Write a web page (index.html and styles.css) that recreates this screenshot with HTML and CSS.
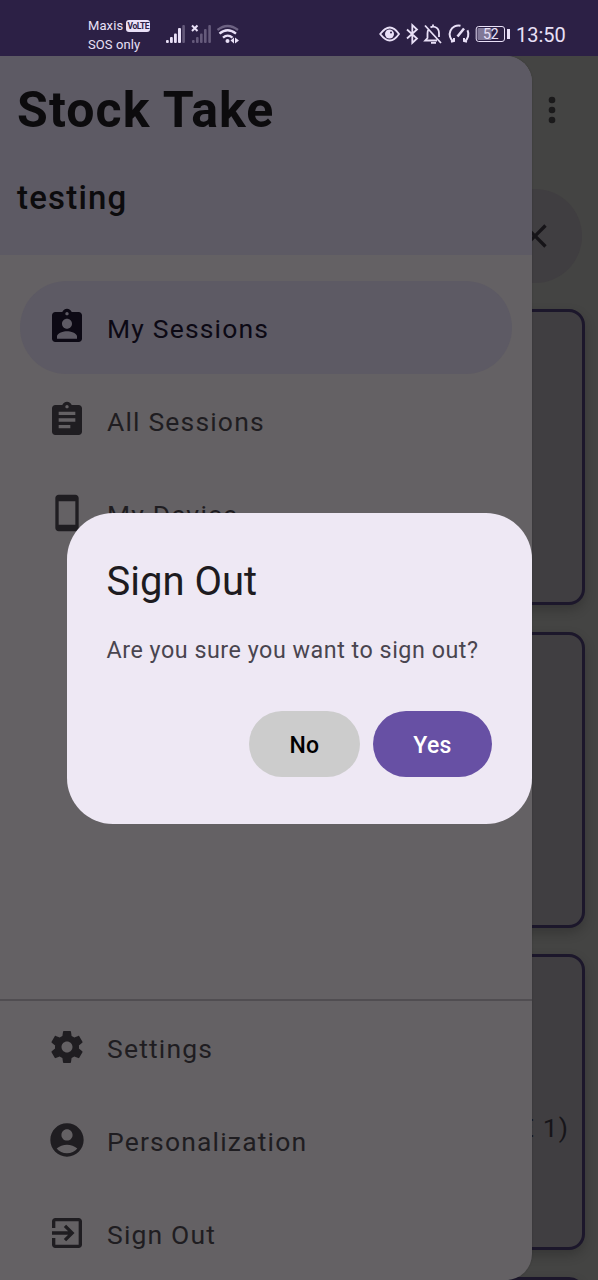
FILE: index.html
```
<!DOCTYPE html>
<html lang="en">
<head>
<meta charset="utf-8">
<title>Stock Take</title>
<link rel="stylesheet" href="styles.css">
</head>
<body>
<div class="screen">
  <header class="statusbar">
    <div class="carrier">
      <div class="carrier-line">Maxis <span class="volte">VoLTE</span></div>
      <div class="carrier-line">SOS only</div>
    </div>
    <svg class="signals" width="76" height="24" viewBox="0 0 76 24" fill="#e9e0f7">
      <rect x="1" y="16" width="2.8" height="3" rx="1"/><rect x="5" y="13" width="2.8" height="6" rx="1"/><rect x="9" y="9.500" width="2.800" height="9.500" rx="1"/><rect x="13" y="4" width="3" height="15" rx="1"/>
      <g opacity=".3"><rect x="17.300" y="1" width="2.600" height="18" rx="1"/><rect x="27" y="16" width="2.600" height="3" rx="1"/><rect x="31" y="13" width="2.600" height="6" rx="1"/><rect x="35" y="9.500" width="2.600" height="9.500" rx="1"/><rect x="39" y="5" width="2.600" height="14" rx="1"/><rect x="43.300" y="1" width="2.600" height="18" rx="1"/></g>
      <path d="M27 1.500l5.500 5.500M32.500 1.500L27 7" stroke="#e9e0f7" stroke-width="2"/>
      <g fill="none" stroke="#e9e0f7" stroke-width="2.300"><path d="M52.500 6Q62.500-2 73 6" opacity=".35"/><path d="M54.500 9.700Q62.500 2.800 71 9.700M58 13.700Q62.700 9.500 67.500 13.700"/></g>
      <circle cx="62.500" cy="17" r="2"/><path d="M65.500 16.500l3.500-3v6zM70 13.500l4 3-4 3z"/>
    </svg>
    <div class="status-right">
      <svg width="126" height="24" viewBox="0 0 126 24" fill="none" stroke="#e9e0f7" stroke-width="1.800">
        <path d="M1.200 12Q11-1 20 12Q11 25 1.200 12Z"/><circle cx="10.500" cy="12" r="4.500" fill="#e9e0f7" stroke="none"/><circle cx="12" cy="10.500" r="1" fill="#2c2045" stroke="none"/>
        <path d="M28 7.500l10 9-4.700 4.500V3l4.700 4.500-10 9"/>
        <path d="M46 3.500l16 17.500M49.500 7.500q-1 1.500-1 4v4.500l-2.300 2.500H58M51.500 5.500q2-1.500 4.500-.5 4 1.500 4 6v4M52 20.800h5M54 2.500v2"/>
        <path d="M74.500 19.500A8.800 8.800 0 0 1 81.500 3.700M88.500 8.200A9 9 0 0 1 85.500 19.500M72 19.800l3-.8v-3M88 19.800l-3-.8v-3" stroke-width="2"/><path d="M78.500 14.500l6.500-8" stroke-width="2.500"/>
        <rect x="97.200" y="4.500" width="28.300" height="15" rx="2.500" stroke-width="1"/>
        <rect x="98.500" y="6" width="14" height="12" rx="1" fill="#817897" stroke="none"/>
        <text class="battery-text" x="104" y="17.300">52</text>
      </svg>
      <span class="battery-tip"></span>
      <span class="clock">13:50</span>
    </div>
  </header>

  <main class="page">
    <div class="toolbar">
      <svg width="40" height="40" viewBox="0 0 24 24" fill="#1b1a1b"><circle cx="12" cy="6" r="2"/><circle cx="12" cy="12" r="2"/><circle cx="12" cy="18" r="2"/></svg>
    </div>
    <div class="search">
      <svg width="40" height="40" viewBox="0 0 24 24" fill="#161418"><path d="M19 6.410L17.590 5 12 10.590 6.410 5 5 6.410 10.590 12 5 17.590 6.410 19 12 13.410 17.590 19 19 17.590 13.410 12z"/></svg>
    </div>
    <div class="cards">
      <article class="card"></article>
      <article class="card"></article>
      <article class="card"><p class="card-note">E 1)</p></article>
      <article class="card"></article>
    </div>

    <aside class="drawer">
      <div class="drawer-head">
        <h1>Stock Take</h1>
        <h2>testing</h2>
      </div>
      <nav class="menu">
        <a class="item active"><svg class="icon" viewBox="0 0 24 24"><path d="M19 3h-4.180C14.400 1.840 13.300 1 12 1s-2.400.84-2.820 2H5c-1.100 0-2 .9-2 2v14c0 1.100.9 2 2 2h14c1.100 0 2-.9 2-2V5c0-1.100-.9-2-2-2zm-7 0c.55 0 1 .45 1 1s-.45 1-1 1-1-.45-1-1 .45-1 1-1zm0 4c1.660 0 3 1.340 3 3s-1.340 3-3 3-3-1.340-3-3 1.340-3 3-3zm6 12H6v-1.400c0-2 4-3.100 6-3.100s6 1.100 6 3.100V19z"/></svg>My Sessions</a>
        <a class="item"><svg class="icon" viewBox="0 0 24 24"><path d="M19 3h-4.180C14.400 1.840 13.300 1 12 1s-2.400.84-2.820 2H5c-1.100 0-2 .9-2 2v14c0 1.100.9 2 2 2h14c1.100 0 2-.9 2-2V5c0-1.100-.9-2-2-2zm-7 0c.55 0 1 .45 1 1s-.45 1-1 1-1-.45-1-1 .45-1 1-1zm2 14H7v-2h7v2zm3-4H7v-2h10v2zm0-4H7V7h10v2z"/></svg>All Sessions</a>
        <a class="item"><svg class="icon" viewBox="0 0 24 24"><path d="M17 1.010L7 1c-1.100 0-2 .9-2 2v18c0 1.100.9 2 2 2h10c1.100 0 2-.9 2-2V3c0-1.100-.9-1.990-2-1.990zM17 19H7V5h10v14z"/></svg>My Device</a>
      </nav>
      <nav class="menu bottom">
        <a class="item"><svg class="icon" viewBox="0 0 24 24"><path d="M19.140 12.940c.04-.3.06-.61.06-.94 0-.32-.02-.64-.07-.94l2.030-1.580c.18-.14.23-.41.12-.61l-1.920-3.320c-.12-.22-.37-.29-.59-.22l-2.390.96c-.5-.38-1.030-.7-1.620-.94l-.36-2.540c-.04-.24-.24-.41-.48-.41h-3.840c-.24 0-.43.17-.47.41l-.36 2.540c-.59.24-1.130.57-1.620.94l-2.390-.96c-.22-.08-.47 0-.59.22L2.740 8.870c-.12.21-.08.47.12.61l2.030 1.580c-.05.3-.09.63-.09.94s.02.64.07.94l-2.030 1.580c-.18.14-.23.41-.12.61l1.920 3.320c.12.22.37.29.59.22l2.390-.96c.5.38 1.030.7 1.620.94l.36 2.540c.05.24.24.41.48.41h3.840c.24 0 .44-.17.47-.41l.36-2.540c.59-.24 1.130-.56 1.620-.94l2.390.96c.22.08.47 0 .59-.22l1.920-3.320c.12-.22.07-.47-.12-.61l-2.010-1.580zM12 15.300c-1.820 0-3.300-1.480-3.300-3.300s1.480-3.300 3.300-3.300 3.300 1.480 3.300 3.300-1.480 3.300-3.300 3.300z"/></svg>Settings</a>
        <a class="item"><svg class="icon" viewBox="0 0 24 24"><path d="M12 2C6.480 2 2 6.480 2 12s4.480 10 10 10 10-4.480 10-10S17.520 2 12 2zm0 3.600c1.850 0 3.350 1.500 3.350 3.350S13.850 12.300 12 12.300s-3.350-1.500-3.350-3.350S10.150 5.600 12 5.600zM12 20c-2.500 0-4.750-1.100-6.200-2.900C7.500 15.600 9.700 14.800 12 14.800s4.500.8 6.200 2.300C16.750 18.900 14.500 20 12 20z"/></svg>Personalization</a>
        <a class="item"><svg class="icon" viewBox="0 0 24 24"><path d="M10.090 15.590L11.500 17l5-5-5-5-1.410 1.410L12.670 11H3v2h9.670l-2.580 2.590zM19 3H5c-1.110 0-2 .9-2 2v4h2V5h14v14H5v-4H3v4c0 1.100.89 2 2 2h14c1.100 0 2-.9 2-2V5c0-1.100-.9-2-2-2z"/></svg>Sign Out</a>
      </nav>
    </aside>

    <section class="dialog">
      <h3>Sign Out</h3>
      <p>Are you sure you want to sign out?</p>
      <div class="actions"><button class="btn no">No</button><button class="btn yes">Yes</button></div>
    </section>
  </main>
</div>
</body>
</html>
```
FILE: styles.css
```
* { box-sizing: border-box; margin: 0; padding: 0; }
body { font-family: Roboto, "Liberation Sans", sans-serif; background: #444443; }
.screen { width: 598px; height: 1280px; overflow: hidden; display: flex; flex-direction: column; }

.statusbar { height: 56px; flex: none; background: #2c2045; color: #e9e0f7; display: flex; align-items: flex-start; padding: 16px 0 0 88px; }
.carrier { width: 77px; font-size: 13px; line-height: 19px; letter-spacing: .1px; white-space: nowrap; }
.carrier-line { display: flex; align-items: center; gap: 3px; }
.volte { background: #e9e0f7; color: #2c2045; font-size: 8.500px; font-weight: 700; line-height: 12px; width: 24px; height: 12px; border-radius: 3px; text-align: center; letter-spacing: -.5px; }
.signals { margin-top: 8px; }
.status-right { display: flex; align-items: center; margin-left: 138px; height: 24px; margin-top: 6px; }
.battery-text { font: 400 14px Roboto, sans-serif; fill: #e9e0f7; stroke: none; }
.battery-tip { width: 2.500px; height: 10px; background: #e9e0f7; margin: 0 6.500px 0 2px; }
.clock { font-size: 20px; line-height: 24px; margin-top: 2px; }

.page { position: relative; flex: 1; min-height: 0; overflow: hidden; background: #444443; }
.toolbar { height: 107px; padding-right: 26px; display: flex; justify-content: flex-end; align-items: center; }
.toolbar, .search { margin-left: 14px; }
.search { height: 94px; width: 568px; margin-top: 26px; border-radius: 47px; background: #403e41; display: flex; justify-content: flex-end; align-items: center; padding-right: 27px; }
.cards { display: flex; flex-direction: column; gap: 26.500px; padding: 26px 13px 0; }
.card { flex: none; height: 296px; border: 3px solid #1c172b; border-radius: 16px; background: #403e41; box-shadow: 0 5px 12px rgba(0,0,0,.2); }
.card-note { text-align: right; padding: 155px 13px 0 0; font-size: 26.500px; line-height: 32px; letter-spacing: 1px; word-spacing: .5px; color: #171519; }

.drawer { position: absolute; left: 0; top: 0; width: 532px; height: 1224px; border-radius: 0 26px 26px 0; background: #646164; overflow: hidden; display: flex; flex-direction: column; box-shadow: 0 0 2px rgba(0,0,0,.2); }
.drawer-head { height: 199px; background: #5d5a64; padding: 24px 17px; color: #0c0b0d; }
h1 { font-size: 50px; line-height: 60px; font-weight: 700; letter-spacing: 1.100px; }
h2 { font-size: 33px; line-height: 40px; font-weight: 500; letter-spacing: 1.200px; margin-top: 38px; }
.menu { padding: 26px 20px 0; }
.bottom { margin-top: auto; border-top: 2px solid #504d51; padding-top: 0; }
.item { display: flex; align-items: center; height: 93px; padding: 2px 0 0 26.500px; gap: 20.500px; font-size: 26.500px; letter-spacing: 1.170px; color: #1f1d21; border-radius: 47px; }
.active { background: #5d5a64; color: #0c0914; height: 93px; }
.icon { width: 40px; height: 40px; margin-top: -3px; fill: currentColor; }

.dialog { position: absolute; left: 66.500px; top: 456.500px; width: 465.500px; height: 311px; border-radius: 46px; background: #eee8f4; padding: 43px 40px 46.500px; display: flex; flex-direction: column; }
h3 { font-size: 40px; line-height: 52px; font-weight: 400; color: #1d1b20; }
.dialog p { font-size: 23.300px; line-height: 34px; letter-spacing: .52px; color: #49454f; margin-top: 25px; white-space: nowrap; }
.actions { margin-top: auto; display: flex; justify-content: flex-end; gap: 13px; }
.btn { border: 0; height: 66px; border-radius: 33px; font: 500 23px/66px Roboto, sans-serif; letter-spacing: .4px; padding-top: 2px; }
.no { width: 111px; background: #ccc; color: #000; }
.yes { width: 119px; background: #6750a4; color: #fff; }
```
